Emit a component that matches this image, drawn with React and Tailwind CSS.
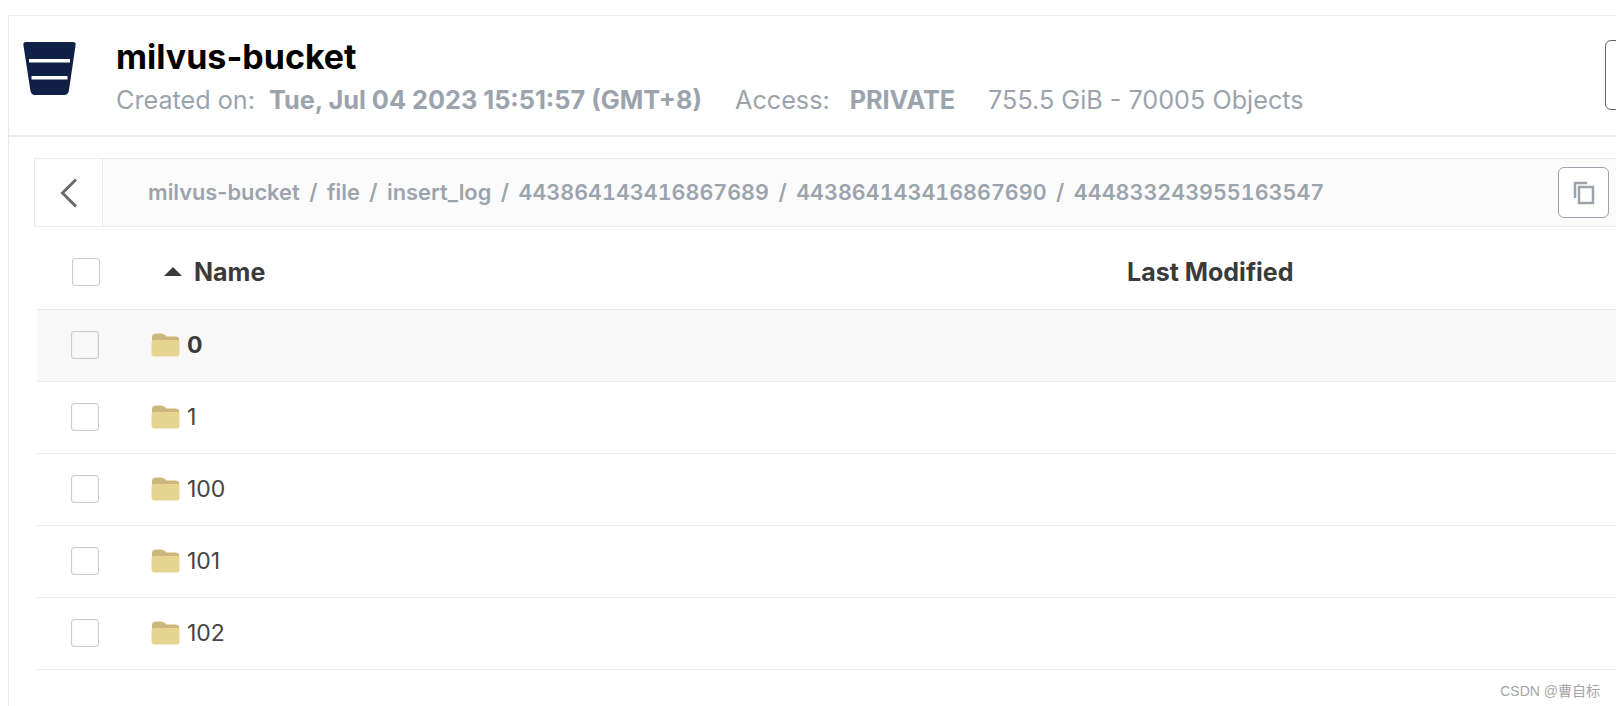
import React from "react";

const rows = ["0", "1", "100", "101", "102"];
const crumbs = [
  "milvus-bucket",
  "file",
  "insert_log",
  "443864143416867689",
  "443864143416867690",
  "444833243955163547",
];

function BucketIcon() {
  return (
    <svg width="54" height="54" viewBox="0 0 54 54" className="shrink-0">
      <path
        d="M3 0H50Q53 0 52.6 3L46 48Q45.400 53 41 53H12Q8 53 7.300 48L0.400 3Q0 0 3 0Z"
        fill="#0f1f45"
      />
      <rect x="6" y="17" width="41" height="3.500" fill="#fff" />
      <rect x="8.500" y="34" width="36" height="3.500" fill="#fff" />
    </svg>
  );
}

function FolderIcon() {
  return (
    <svg width="29" height="24" viewBox="0 0 29 24" className="shrink-0 block">
      <path
        d="M1 9V4Q1 0.500 5 0.500H10Q12.500 0.500 14 2L15.500 3.500H25Q28 3.500 28 6V9H1Z"
        fill="#cbb77e"
      />
      <path
        d="M0.500 10Q0.500 7 3.500 7H25.500Q28.500 7 28.500 10V20.500Q28.500 23.500 25.500 23.500H3.500Q0.500 23.500 0.500 20.500Z"
        fill="#e6d590"
      />
    </svg>
  );
}

function Checkbox({ dim }) {
  return (
    <div
      className={`w-7 h-7 rounded-[3px] border shadow-[inset_0_0_2px_rgba(0,0,0,0.08)] ${
        dim ? "border-[#cccccc] bg-[#f8f8f8]" : "border-[#cccccc] bg-white"
      }`}
    />
  );
}

function Crumb({ text }) {
  if (/^\d+$/.test(text)) {
    return <span className="tabular-nums text-[21.500px]">{text}</span>;
  }
  return <span>{text}</span>;
}

export default function App() {
  return (
    <div
      className="relative w-[1616px] h-[706px] overflow-hidden bg-white pt-[15px] pl-2 text-[#3a3a3a]"
      style={{ fontFamily: "Inter, sans-serif" }}
    >
      <div className="border-t border-l border-[#eaeaea] h-full">
        {/* Bucket header */}
        <div className="h-[121px] border-b-2 border-[#eaeaea] flex items-start pl-[14px] relative">
          <div className="pt-[26px]">
            <BucketIcon />
          </div>
          <div className="ml-[39px] pt-[21px]">
            <h1 className="text-[34px] leading-10 font-bold text-black">milvus-bucket</h1>
            <div className="flex text-[25.200px] leading-8 text-[#9ba3ad] mt-[7px]">
              <span>Created on:</span>
              <span className="text-[25.300px] font-bold ml-[14px]">Tue, Jul 04 2023 15:51:57 (GMT+8)</span>
              <span className="ml-[33px]">Access:</span>
              <span className="font-bold ml-5">PRIVATE</span>
              <span className="ml-[33px]">755.5 GiB - 70005 Objects</span>
            </div>
          </div>
          <div className="absolute left-[1596px] top-[24px] w-10 h-[70px] rounded-md border border-[#666] bg-white" />
        </div>

        <div className="pl-[25px] pt-[21px]">
          {/* Breadcrumb */}
          <div className="w-[1590px] h-[69px] border border-[#eaeaea] bg-[#fbfbfb] flex items-center">
            <div className="w-[68px] h-full bg-white border-r border-[#eaeaea] flex items-center justify-center shrink-0">
              <svg width="20" height="30" viewBox="0 0 20 30" fill="none">
                <path d="M17 1.500L3.500 15L17 28.500" stroke="#6b6b6b" strokeWidth="3" />
              </svg>
            </div>
            <div className="ml-[45px] flex items-center gap-[8.500px] text-[21.800px] font-semibold text-[#9ba3ad] whitespace-pre">
              {crumbs.map((crumb, i) => (
                <React.Fragment key={crumb}>
                  {i > 0 && <span className="px-[1px]">/</span>}
                  <Crumb text={crumb} />
                </React.Fragment>
              ))}
            </div>
            <div className="ml-auto mr-[14px] w-[51px] h-[51px] rounded-md border border-[#9ba3ad] bg-white flex items-center justify-center">
              <svg width="22" height="24" viewBox="0 0 22 24" fill="none" stroke="#9ba3ad" strokeWidth="2.500">
                <path d="M2 17V2H14" />
                <rect x="6" y="6" width="14" height="16" />
              </svg>
            </div>
          </div>

          {/* Table header */}
          <div className="ml-[3px] h-[83px] border-b border-[#eaeaea] flex items-center pt-[7px]">
            <div className="w-[35px]" />
            <Checkbox />
            <div className="ml-[64px] w-0 h-0 border-x-[9px] border-x-transparent border-b-[9px] border-b-[#3a3a3a]" />
            <span className="ml-[12px] mt-[2px] text-[25px] font-bold w-[933px]">Name</span>
            <span className="mt-[2px] text-[25px] font-bold">Last Modified</span>
          </div>

          {/* Rows */}
          {rows.map((name, i) => (
            <div
              key={name}
              className={`ml-[3px] h-[72px] border-b border-[#eaeaea] flex items-center ${
                i === 0 ? "bg-[#f8f8f8]" : "bg-white"
              }`}
            >
              <div className="w-[34px]" />
              <div className="mb-[2px]">
                <Checkbox dim={i === 0} />
              </div>
              <div className="ml-[52px] mb-[1px]">
                <FolderIcon />
              </div>
              <span className={`ml-[7px] text-[23px] ${i === 0 ? "font-bold" : "text-[#444444]"}`}>{name}</span>
            </div>
          ))}
        </div>
      </div>

      {/* Watermark */}
      <div
        className="absolute right-[16px] top-[681px] text-[14px] text-[#a5a5a5]"
        style={{ fontFamily: "'Liberation Sans', 'Noto Sans CJK SC', sans-serif" }}
      >
        CSDN @曹自标
      </div>
    </div>
  );
}
